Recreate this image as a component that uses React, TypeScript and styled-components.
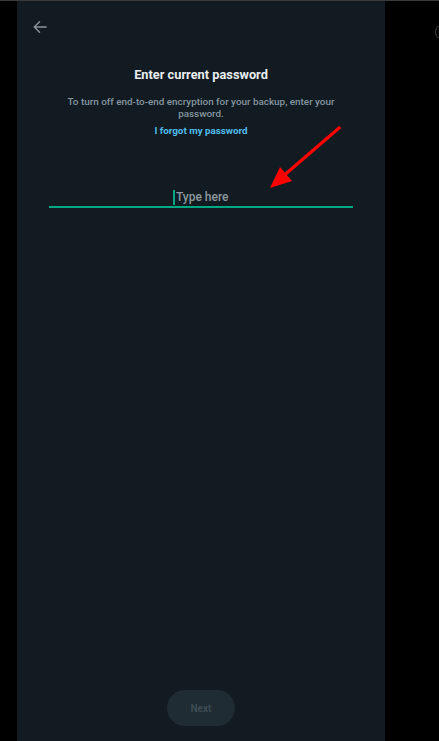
import React from "react";
import styled, { createGlobalStyle } from "styled-components";

const Global = createGlobalStyle`
  html, body { margin: 0; padding: 0; background: #000; }
  body { font-family: Roboto, "Noto Sans", "Liberation Sans", sans-serif; }
  * { box-sizing: border-box; }
`;

const Screen = styled.div`
  position: relative;
  width: 439px;
  height: 741px;
  background: #000;
  border-top: 1px solid #3a3b3c;
  overflow: hidden;
  display: flex;
`;

const Panel = styled.div`
  margin-left: 17px;
  width: 368px;
  height: 100%;
  background: #111b21;
  display: flex;
  flex-direction: column;
  align-items: stretch;
`;

const Header = styled.div`
  height: 50px;
  padding: 20px 0 0 16px;
`;

const BackButton = styled.button`
  width: 14px;
  height: 12px;
  padding: 0;
  border: 0;
  background: transparent;
  display: flex;
  align-items: center;
  justify-content: center;
  cursor: pointer;
  color: #8a959c;
`;

const Content = styled.div`
  display: flex;
  flex-direction: column;
  align-items: center;
  padding: 16px 24px 0;
`;

const Title = styled.h1`
  margin: 0;
  font-size: 12.8px;
  font-weight: 700;
  color: #e9edef;
  line-height: 16px;
`;

const Desc = styled.p`
  margin: 13px 0 0;
  font-size: 9.9px;
  line-height: 12px;
  color: #8696a0;
  text-align: center;
  font-weight: 500;
`;

const Link = styled.a`
  margin-top: 5px;
  font-size: 9.8px;
  font-weight: 700;
  color: #53bdeb;
  text-decoration: none;
  line-height: 12px;
`;

const Field = styled.label`
  margin: 52px 0 0;
  width: 304px;
  display: flex;
  justify-content: center;
  align-items: center;
  height: 17px;
  border-bottom: 2px solid #00a884;
  box-sizing: content-box;
`;

const Caret = styled.span`
  width: 1.5px;
  height: 15px;
  background: #00a884;
  margin-right: 1px;
`;

const Placeholder = styled.span`
  font-size: 12px;
  font-weight: 500;
  color: #8d989f;
  line-height: 15px;
`;

const Spacer = styled.div`
  flex: 1;
`;

const Footer = styled.div`
  display: flex;
  justify-content: center;
  padding-bottom: 15px;
`;

const NextButton = styled.button`
  width: 68px;
  height: 36px;
  border: 0;
  border-radius: 18px;
  background: #1f2c33;
  color: #3d4b54;
  font-family: inherit;
  font-size: 10px;
  font-weight: 700;
`;

const Annotation = styled.svg`
  position: absolute;
  left: 0;
  top: 0;
  pointer-events: none;
`;

const EdgeDot = styled.div`
  position: absolute;
  right: -8px;
  top: 24px;
  width: 12px;
  height: 14px;
  border-radius: 50%;
  border: 1px solid #3a3b3c;
`;

export default function App() {
  return (
    <>
      <Global />
      <Screen>
        <Panel>
          <Header>
            <BackButton aria-label="Back">
              <svg width="16" height="14" viewBox="0 0 16 14" fill="none" stroke="currentColor" strokeWidth="1.6" strokeLinecap="round" strokeLinejoin="round">
                <path d="M15 7H1.5" />
                <path d="M7.5 1L1.5 7l6 6" />
              </svg>
            </BackButton>
          </Header>
          <Content>
            <Title>Enter current password</Title>
            <Desc>
              To turn off end-to-end encryption for your backup, enter your
              <br />
              password.
            </Desc>
            <Link href="#">I forgot my password</Link>
            <Field>
              <Caret />
              <Placeholder>Type here</Placeholder>
            </Field>
          </Content>
          <Spacer />
          <Footer>
            <NextButton disabled>Next</NextButton>
          </Footer>
        </Panel>
        <Annotation width="439" height="741" viewBox="0 0 439 741">
          <line x1="339" y1="127" x2="281" y2="177" stroke="#ff0000" strokeWidth="3.2" strokeLinecap="square" />
          <polygon points="270,187 280,166 292,180" fill="#ff0000" />
        </Annotation>
        <EdgeDot />
      </Screen>
    </>
  );
}
